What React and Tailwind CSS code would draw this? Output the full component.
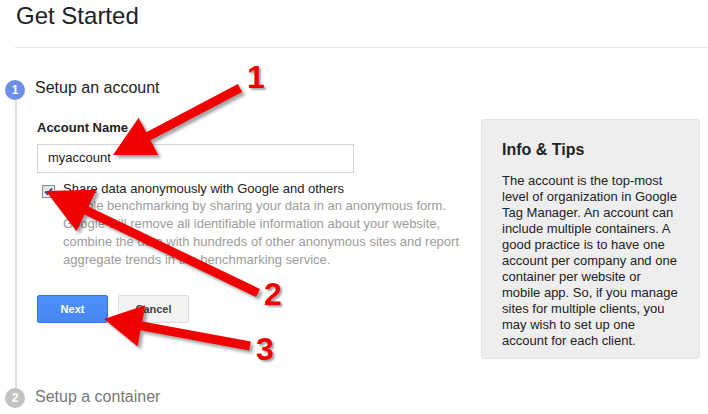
import React from 'react';

const descLines = [
  'Enable benchmarking by sharing your data in an anonymous form.',
  'Google will remove all identifiable information about your website,',
  'combine the data with hundreds of other anonymous sites and report',
  'aggregate trends in the benchmarking service.',
];

const tipLines = [
  'The account is the top-most',
  'level of organization in Google',
  'Tag Manager. An account can',
  'include multiple containers. A',
  'good practice is to have one',
  'account per company and one',
  'container per website or',
  'mobile app. So, if you manage',
  'sites for multiple clients, you',
  'may wish to set up one',
  'account for each client.',
];

// annotation arrows drawn on top of the screenshot
const arrows = [
  '242.1,92 150.5,140.3 158.2,154.9 113,155 138.6,117.7 146.3,132.3 237.9,84',
  '259.9,289 88.4,206.4 96.5,189.8 46,191 76.5,231.2 84.5,214.5 256,297',
  '250.8,341.6 142.2,321.5 145.2,305.3 104,319 137.6,346.5 140.6,330.3 249.2,350.4',
];

const StepBadge = ({ n, active }) => (
  <div
    className={`w-5 h-5 flex-none rounded-full flex items-center justify-center text-[12px] font-bold text-white ${
      active ? 'bg-[#6d8ee8]' : 'bg-[#c2c2c2]'
    }`}
  >
    {n}
  </div>
);

const Callout = ({ children, className }) => (
  <div
    className={`absolute text-[32px] leading-[32px] font-bold text-[#ee0000] [text-shadow:2px_2px_2px_rgba(0,0,0,0.35)] ${className}`}
  >
    {children}
  </div>
);

export default function App() {
  return (
    <div className="relative w-[708px] h-[414px] overflow-hidden bg-white font-['Liberation_Sans',Arial,sans-serif] text-[#222]">
      <div className="ml-[15px] h-[48px] border-b border-[#e5e5e5] pt-[2px] pl-[1px]">
        <h1 className="text-[24px] leading-[28px] text-[#222]">Get Started</h1>
      </div>

      <div className="flex">
        <div className="w-[481px] flex-none">
          <div className="mt-[32px] flex items-start gap-[10px] pl-[5px]">
            <StepBadge n="1" active />
            <span className="-mt-[2px] text-[16px] leading-[20px] text-[#222]">Setup an account</span>
          </div>

          <div className="ml-[15px] border-l-2 border-[#dedede] pl-[20px] pt-[19px] pb-[65px]">
            <div className="text-[13px] leading-[17.7px] font-bold text-[#222]">Account Name</div>
            <div className="mt-[7px] w-[317px] h-[29px] border border-[#d3d3d3] flex items-center pl-[10px] text-[13px] text-[#222]">
              myaccount
            </div>

            <div className="mt-[7px] flex items-start pl-[5px]">
              <div className="mt-[5px] w-[13px] h-[13px] flex-none border border-[#8e8f8f] bg-gradient-to-br from-[#dcdcdc] to-white flex items-center justify-center">
                <svg width="9" height="9" viewBox="0 0 9 9">
                  <path d="M1 4.5 L3.5 7 L8 1.5" fill="none" stroke="#2b4fa3" strokeWidth="2" />
                </svg>
              </div>
              <div className="ml-[8px] text-[13px] leading-[17.7px]">
                <div className="text-[#222]">Share data anonymously with Google and others</div>
                {descLines.map((l) => (
                  <div key={l} className="whitespace-nowrap text-[#9c9c9c]">
                    {l}
                  </div>
                ))}
              </div>
            </div>

            <div className="mt-[27px] flex gap-[10px]">
              <button className="w-[71px] h-[28px] rounded-[2px] bg-gradient-to-b from-[#4d90fe] to-[#4787ed] border border-[#3079ed] text-[11px] font-bold text-white">
                Next
              </button>
              <button className="w-[71px] h-[28px] rounded-[2px] bg-[#f3f3f3] border border-[#dcdcdc] text-[11px] font-bold text-[#444]">
                Cancel
              </button>
            </div>
          </div>

          <div className="flex items-start gap-[10px] pl-[5px]">
            <StepBadge n="2" />
            <span className="-mt-[1px] text-[16px] leading-[20px] text-[#777]">Setup a container</span>
          </div>
        </div>

        <div className="mt-[71px] w-[219px] h-[240px] flex-none rounded-[3px] bg-[#eeeeee] border border-[#e4e4e4] pl-[20px] pt-[20px]">
          <div className="text-[16px] leading-[20px] font-bold text-[#222]">Info &amp; Tips</div>
          <div className="mt-[13px] text-[13px] leading-[16px] text-[#222]">
            {tipLines.map((l) => (
              <div key={l} className="whitespace-nowrap">
                {l}
              </div>
            ))}
          </div>
        </div>
      </div>

      <svg className="absolute inset-0 pointer-events-none" width="708" height="414" viewBox="0 0 708 414">
        <defs>
          <filter id="sh" x="-20%" y="-20%" width="140%" height="140%">
            <feGaussianBlur stdDeviation="1.6" />
          </filter>
        </defs>
        {arrows.map((p) => (
          <g key={p}>
            <polygon points={p} fill="#000" opacity="0.35" transform="translate(3 3)" filter="url(#sh)" />
            <polygon points={p} fill="#f00000" />
          </g>
        ))}
      </svg>

      <Callout className="left-[247px] top-[61px]">1</Callout>
      <Callout className="left-[264px] top-[278px]">2</Callout>
      <Callout className="left-[256px] top-[333px]">3</Callout>
    </div>
  );
}
